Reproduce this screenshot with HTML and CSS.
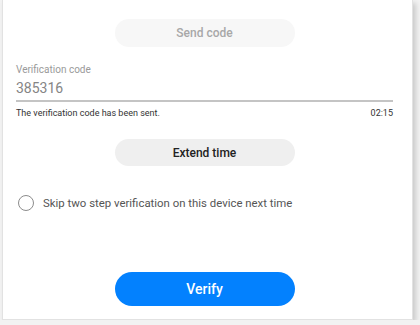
FILE: index.html
```html
<!DOCTYPE html>
<html>
  <head>
    <title>Two step verification</title>
    <meta charset="UTF-8" />
    <link rel="stylesheet" href="styles.css">
  </head>
  <body>
    <div class="card">
      <button class="pill send" disabled>Send code</button>
      <div class="field">
        <div class="label">Verification code</div>
        <div class="value">385316</div>
      </div>
      <div class="helper">
        <span>The verification code has been sent.</span>
        <span>02:15</span>
      </div>
      <button class="pill extend">Extend time</button>
      <label class="skip">
        <span class="radio"></span>
        Skip two step verification on this device next time
      </label>
      <button class="pill verify">Verify</button>
    </div>
  </body>
</html>
```

FILE: styles.css
```css
* {
  font-family: Roboto, "Noto Sans", sans-serif;
  box-sizing: border-box;
}
html {
  background-color: #f2f2f2;
}
body {
  margin: 0;
}
.card {
  display: flex;
  flex-direction: column;
  width: 411px;
  height: 320px;
  margin-left: 2px;
  padding: 19px 19px 0 13px;
  background: #ffffff;
  border: 1px solid #e2e2e2;
  border-top: none;
  box-shadow: 3px 3px 5px rgba(0, 0, 0, 0.16);
}
.pill {
  align-self: center;
  width: 180px;
  height: 28px;
  border: none;
  border-radius: 14px;
  font-size: 12px;
  font-weight: 500;
  cursor: pointer;
}
.send {
  background: #f7f7f7;
  color: #a8a8a8;
}
.field {
  margin-top: 16px;
  border-bottom: 2px solid #c4c4c4;
  padding-bottom: 2px;
}
.label {
  font-size: 10px;
  line-height: 14px;
  color: #9a9a9a;
}
.value {
  margin-top: 1px;
  font-size: 14px;
  line-height: 20px;
  color: #858585;
}
.helper {
  display: flex;
  justify-content: space-between;
  margin-top: 5px;
  font-size: 9px;
  line-height: 12px;
  color: #333333;
}
.extend {
  margin-top: 20px;
  height: 27px;
  background: #efefef;
  color: #222222;
}
.skip {
  display: flex;
  align-items: center;
  gap: 9px;
  margin-top: 29px;
  margin-left: 2px;
  font-size: 11.4px;
  line-height: 16px;
  color: #555555;
}
.radio {
  width: 16px;
  height: 16px;
  border: 1px solid #8c8c8c;
  border-radius: 50%;
}
.verify {
  margin-top: 61px;
  height: 34px;
  border-radius: 17px;
  background: #0381fe;
  color: #ffffff;
  font-size: 14px;
}
```
